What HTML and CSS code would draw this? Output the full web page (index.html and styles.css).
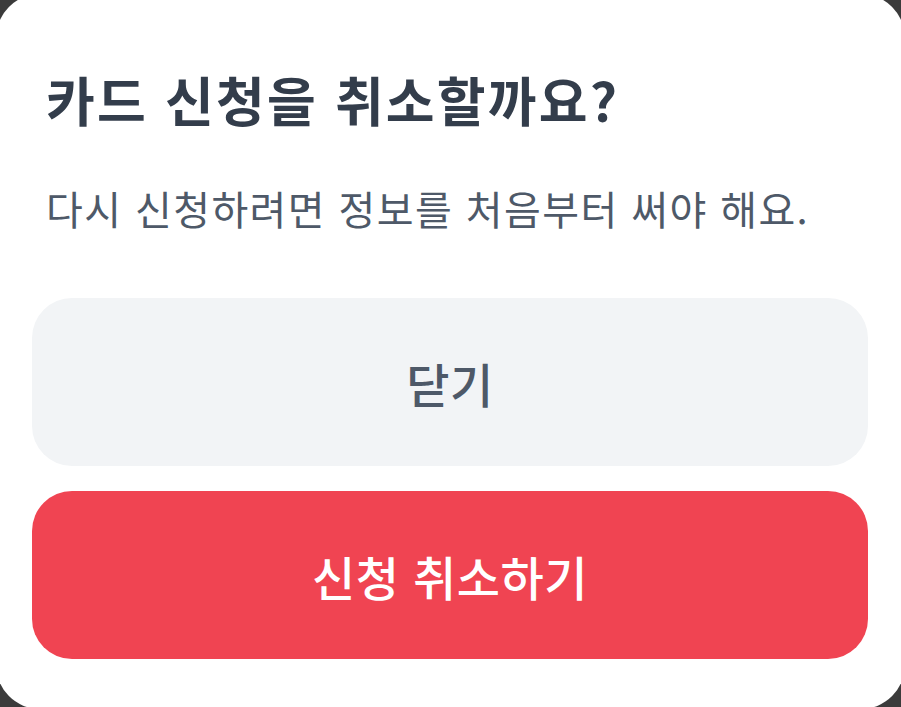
FILE: index.html
```html
<!DOCTYPE html>
<html lang="ko">
<head>
<meta charset="utf-8">
<link rel="stylesheet" href="styles.css">
</head>
<body>
<div class="sheet">
  <div class="texts">
    <h1 class="title">카드 신청을 취소할까요?</h1>
    <p class="desc">다시 신청하려면 정보를 처음부터 써야 해요.</p>
  </div>
  <div class="actions">
    <button class="btn btn-close">닫기</button>
    <button class="btn btn-danger">신청 취소하기</button>
  </div>
</div>
</body>
</html>
```

FILE: styles.css
```css
html, body {
  margin: 0;
  padding: 0;
  background: #3b3b3b;
  overflow: hidden;
}
body {
  width: 901px;
  height: 707px;
  font-family: "Noto Sans CJK KR", "Noto Sans", sans-serif;
}
.sheet {
  margin: -6px 0 0 -4px;
  width: 909px;
  height: 715px;
  background: #ffffff;
  border-radius: 44px;
  box-sizing: border-box;
  display: flex;
  flex-direction: column;
}
.texts {
  padding: 73px 0 0 50px;
}
.title {
  margin: 0;
  font-size: 53px;
  line-height: 64px;
  font-weight: 700;
  color: #333d4b;
  letter-spacing: 2.2px;
}
.desc {
  margin: 51px 0 0;
  font-size: 40px;
  line-height: 52px;
  font-weight: 400;
  color: #4e5968;
  letter-spacing: 1.4px;
}
.actions {
  margin: 64px 0 0 36px;
  width: 836px;
  display: flex;
  flex-direction: column;
  gap: 25px;
}
.btn {
  height: 168px;
  border: none;
  border-radius: 40px;
  font-family: inherit;
  font-size: 47px;
  font-weight: 500;
  padding: 0;
  letter-spacing: 0.5px;
}
.btn-close {
  background: #f2f4f6;
  color: #4e5968;
}
.btn-danger {
  background: #f04452;
  color: #ffffff;
}
```
